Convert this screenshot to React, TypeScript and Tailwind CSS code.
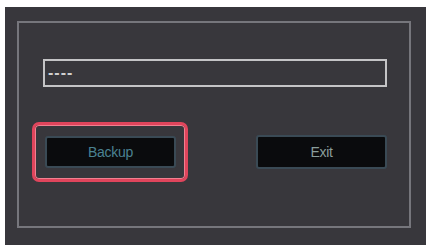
import React from "react";

export default function App() {
  return (
    <div className="w-[426px] h-[245px] bg-white overflow-hidden" style={{ fontFamily: '"Liberation Sans", Arial, sans-serif' }}>
      <div className="ml-[5px] mt-[7px] w-[421px] h-[238px] bg-[#38373c] pt-[14px] pl-[12px]">
        <div className="w-[394px] h-[207px] border-2 border-[#76767c] pl-[24px] pt-[36px]">
          <div className="w-[344px] h-[28px] border-2 border-[#c4c4c6] flex items-center pl-[3px]">
            <span className="text-[16px] leading-none text-[#cfcfcf] tracking-[1px] font-bold">----</span>
          </div>
          <div className="mt-[49px] w-[344px] pl-[2px] flex justify-between items-start">
            <div className="relative">
              <div className="absolute left-[-13px] top-[-14px] w-[156px] h-[60px] rounded-[7px] border-[3px] border-[#e0455c] shadow-[inset_0_0_0_1px_#f08090]"></div>
              <button className="w-[131px] h-[32px] rounded-[3px] border-2 border-[#3a4a55] bg-[#0a0b0d] text-[14px] tracking-[-0.3px] text-[#4a8292] flex items-center justify-center">
                Backup
              </button>
            </div>
            <button className="w-[131px] h-[34px] -mt-[1px] rounded-[3px] border-2 border-[#3a4a55] bg-[#0a0b0d] text-[14px] tracking-[-0.3px] text-[#8a9e9c] flex items-center justify-center">
              Exit
            </button>
          </div>
        </div>
      </div>
    </div>
  );
}
